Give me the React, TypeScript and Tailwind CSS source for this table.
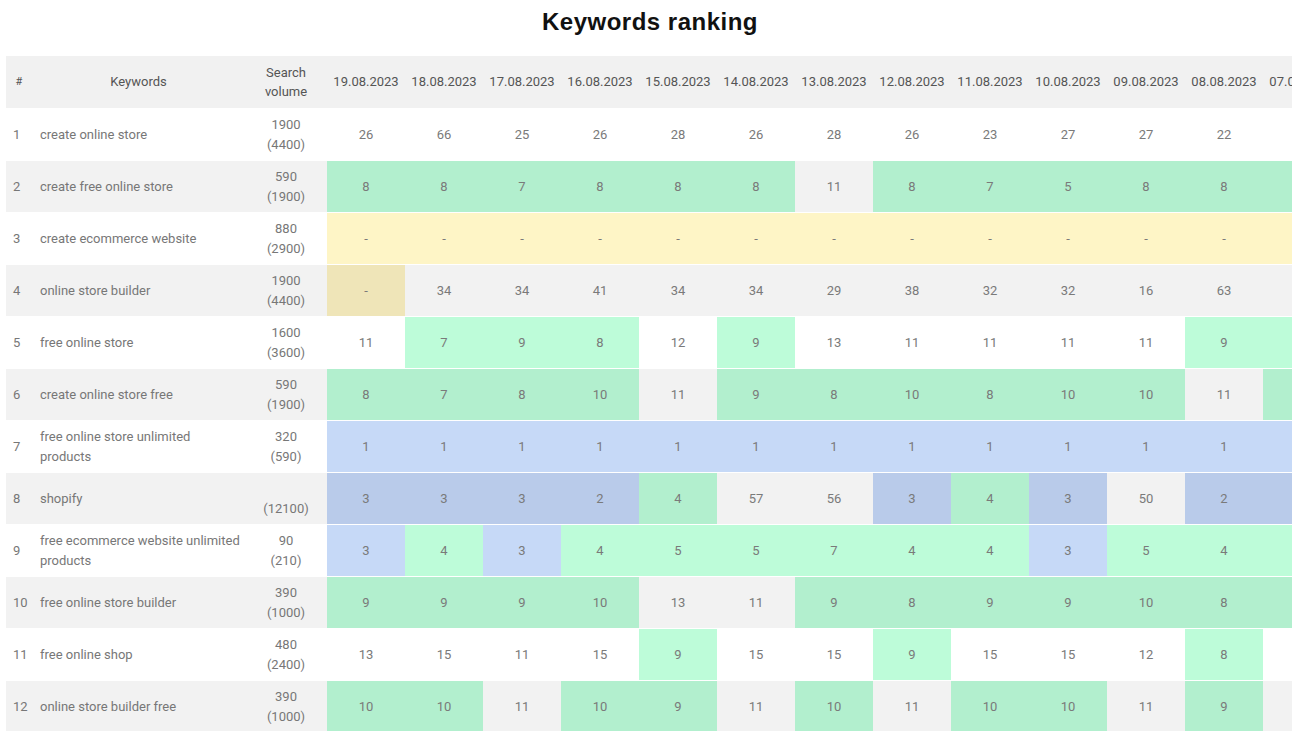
import React from 'react';

// Dates shown as columns (the last one is cut off by the container)
const dates = [
  '19.08.2023', '18.08.2023', '17.08.2023', '16.08.2023', '15.08.2023', '14.08.2023', '13.08.2023',
  '12.08.2023', '11.08.2023', '10.08.2023', '09.08.2023', '08.08.2023', '07.08.2023',
];

interface Row {
  keyword: string;
  volume: string; // first line, may be empty
  total: string; // second line in brackets
  cells: string[]; // first char = colour code (n, g, b, y), rest = position
}

const rows: Row[] = [
  { keyword: 'create online store', volume: '1900', total: '(4400)', cells: ['n26', 'n66', 'n25', 'n26', 'n28', 'n26', 'n28', 'n26', 'n23', 'n27', 'n27', 'n22', 'n24'] },
  { keyword: 'create free online store', volume: '590', total: '(1900)', cells: ['g8', 'g8', 'g7', 'g8', 'g8', 'g8', 'n11', 'g8', 'g7', 'g5', 'g8', 'g8', 'g8'] },
  { keyword: 'create ecommerce website', volume: '880', total: '(2900)', cells: ['y-', 'y-', 'y-', 'y-', 'y-', 'y-', 'y-', 'y-', 'y-', 'y-', 'y-', 'y-', 'y-'] },
  { keyword: 'online store builder', volume: '1900', total: '(4400)', cells: ['y-', 'n34', 'n34', 'n41', 'n34', 'n34', 'n29', 'n38', 'n32', 'n32', 'n16', 'n63', 'n40'] },
  { keyword: 'free online store', volume: '1600', total: '(3600)', cells: ['n11', 'g7', 'g9', 'g8', 'n12', 'g9', 'n13', 'n11', 'n11', 'n11', 'n11', 'g9', 'g9'] },
  { keyword: 'create online store free', volume: '590', total: '(1900)', cells: ['g8', 'g7', 'g8', 'g10', 'n11', 'g9', 'g8', 'g10', 'g8', 'g10', 'g10', 'n11', 'g9'] },
  { keyword: 'free online store unlimited products', volume: '320', total: '(590)', cells: ['b1', 'b1', 'b1', 'b1', 'b1', 'b1', 'b1', 'b1', 'b1', 'b1', 'b1', 'b1', 'b1'] },
  { keyword: 'shopify', volume: '', total: '(12100)', cells: ['b3', 'b3', 'b3', 'b2', 'g4', 'n57', 'n56', 'b3', 'g4', 'b3', 'n50', 'b2', 'b3'] },
  { keyword: 'free ecommerce website unlimited products', volume: '90', total: '(210)', cells: ['b3', 'g4', 'b3', 'g4', 'g5', 'g5', 'g7', 'g4', 'g4', 'b3', 'g5', 'g4', 'g4'] },
  { keyword: 'free online store builder', volume: '390', total: '(1000)', cells: ['g9', 'g9', 'g9', 'g10', 'n13', 'n11', 'g9', 'g8', 'g9', 'g9', 'g10', 'g8', 'g9'] },
  { keyword: 'free online shop', volume: '480', total: '(2400)', cells: ['n13', 'n15', 'n11', 'n15', 'g9', 'n15', 'n15', 'g9', 'n15', 'n15', 'n12', 'g8', 'n15'] },
  { keyword: 'online store builder free', volume: '390', total: '(1000)', cells: ['g10', 'g10', 'n11', 'g10', 'g9', 'n11', 'g10', 'n11', 'g10', 'g10', 'n11', 'g9', 'n11'] },
];

// Cell backgrounds for white (odd) rows and grey (even) rows
const lightBg: Record<string, string> = {
  n: 'bg-white',
  g: 'bg-[#bdfcd9]',
  b: 'bg-[#c6d9f7]',
  y: 'bg-[#fef5c6]',
};
const darkBg: Record<string, string> = {
  n: 'bg-[#f2f2f2]',
  g: 'bg-[#b2efce]',
  b: 'bg-[#b9cbea]',
  y: 'bg-[#efe5b8]',
};

const App: React.FC = () => {
  return (
    <div className="min-h-screen bg-white font-['Roboto',sans-serif] text-[13px]">
      {/* Page title */}
      <div className="h-[56px] pt-[8px] text-center">
        <h1 className="font-['Liberation_Sans',Arial,sans-serif] text-[24px] leading-[28px] font-bold tracking-[0.5px] text-[#111]">
          Keywords ranking
        </h1>
      </div>

      {/* Table, clipped on the right */}
      <div className="ml-[6px] w-[1286px] overflow-hidden">
        <div className="w-[1335px]">
          {/* Header row */}
          <div className="flex h-[52px] items-center bg-[#f1f1f1] text-[#555]">
            <div className="w-[26px] shrink-0 text-center text-[11px]">#</div>
            <div className="w-[213px] shrink-0 text-center">Keywords</div>
            <div className="w-[82px] shrink-0 text-center leading-[19px]">
              Search
              <br />
              volume
            </div>
            {dates.map(d => (
              <div key={d} className="w-[78px] shrink-0 text-center whitespace-nowrap">
                {d}
              </div>
            ))}
          </div>

          {/* Body rows */}
          {rows.map((row, i) => {
            const even = i % 2 === 1;
            const bgs = even ? darkBg : lightBg;
            return (
              <div
                key={row.keyword}
                className={`flex h-[52px] border-t border-white ${even ? 'bg-[#f2f2f2]' : 'bg-white'}`}
              >
                <div className="flex w-[26px] shrink-0 items-center pl-[7px] text-[#777]">{i + 1}</div>
                <div className="flex w-[213px] shrink-0 items-center pl-[8px] pr-[2px] leading-[20px] text-[#777]">
                  {row.keyword}
                </div>
                <div className="flex w-[82px] shrink-0 flex-col items-center justify-center leading-[20px] text-[#777]">
                  <span className="h-[20px]">{row.volume}</span>
                  <span>{row.total}</span>
                </div>
                {row.cells.map((c, j) => (
                  <div
                    key={j}
                    className={`flex w-[78px] shrink-0 items-center justify-center text-[#7a7a7a] ${bgs[c[0]]}`}
                  >
                    {c.slice(1)}
                  </div>
                ))}
              </div>
            );
          })}
        </div>
      </div>
    </div>
  );
};

export default App;
